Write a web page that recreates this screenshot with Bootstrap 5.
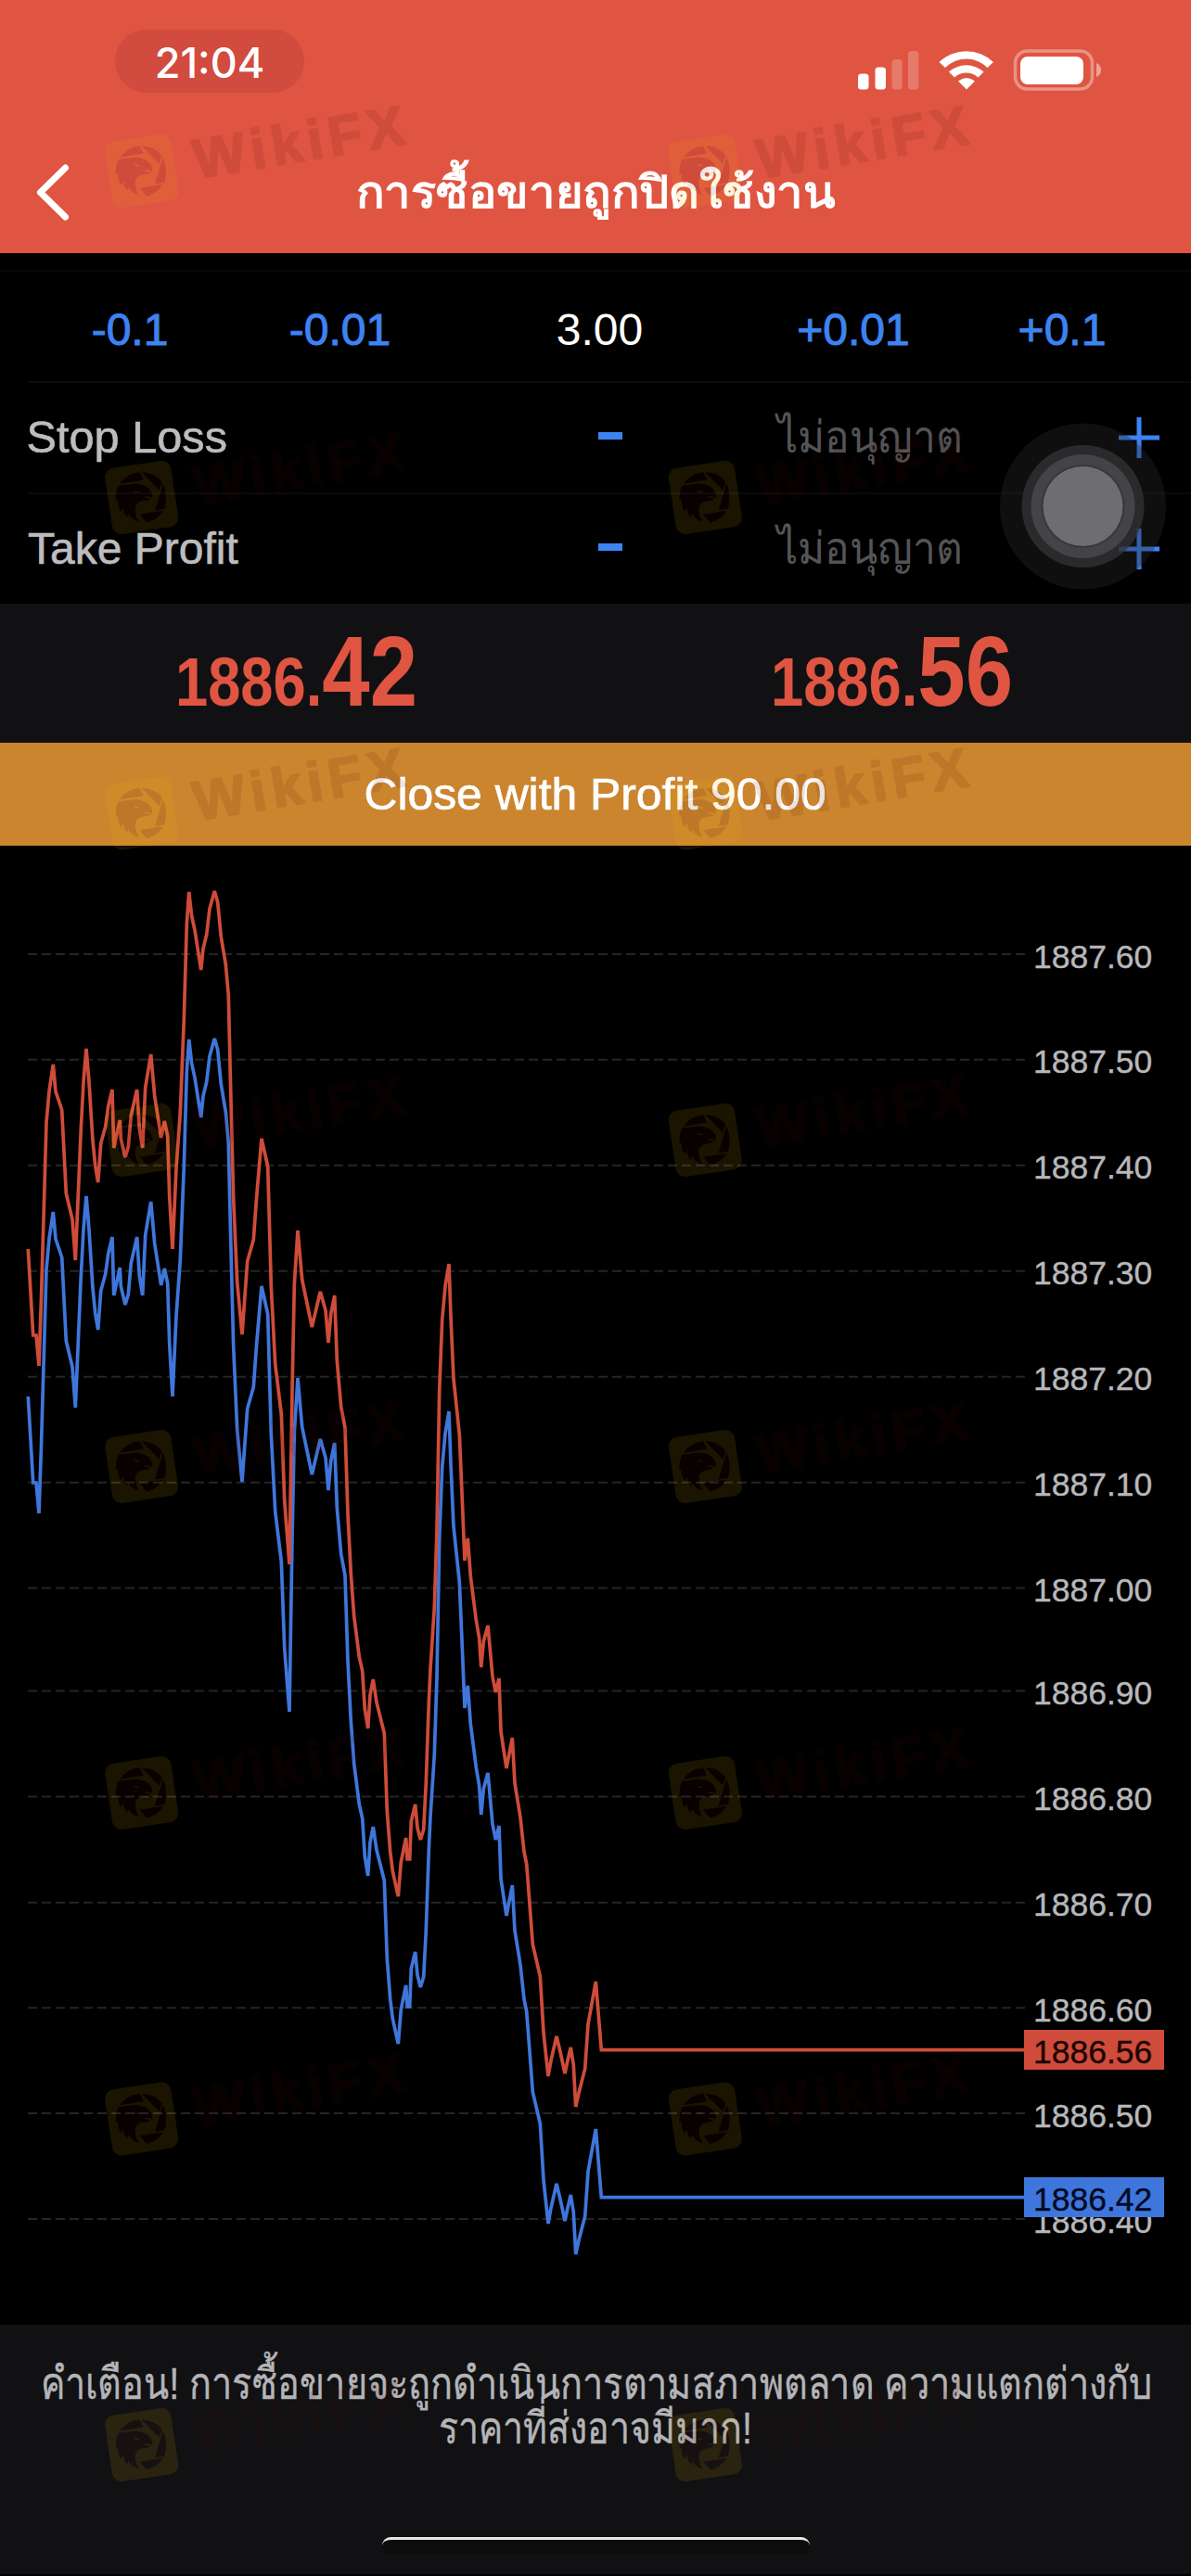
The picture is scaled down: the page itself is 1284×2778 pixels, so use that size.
<!DOCTYPE html>
<html lang="th">
<head>
    <meta charset="UTF-8">
    <meta name="viewport" content="width=device-width, initial-scale=1.0">
    <title>การซื้อขายถูกปิดใช้งาน</title>
    <link href="https://cdn.jsdelivr.net/npm/bootstrap@5.3.0/dist/css/bootstrap.min.css" rel="stylesheet">
    <style>
        body { background: #000; font-family: "Liberation Sans", sans-serif; font-size: 48px; line-height: 1; overflow-x: hidden; }
        .screen { width: 1284px; height: 2778px; background: #000001; }
        .top-area { height: 273px; background: #df5542; }
        .status-row { height: 132px; padding: 32px 97px 32px 124px; }
        .status-icons { margin-top: 20px; }
        .clock { width: 204px; height: 68px; background: #d14b3f; font-family: Inter, sans-serif; font-size: 45px; font-weight: 500; padding-top: 2px; }
        .title-row { height: 141px; padding: 10px 36px 0; }
        .title-side { width: 44px; }
        .page-title { font-size: 48px; font-weight: 700; }
        .volume-row { height: 120px; margin-top: 18px; padding: 8px 0 0 26px; grid-template-columns: 228px 225px 335px 212px 238px; border-top: 2px solid #08080a; }
        .level-row { height: 120px; margin-left: 30px; grid-template-columns: 530px 196px 362px 54px 112px; border-top: 2px solid #0b0b0d; color: #bdbdc0; -webkit-text-stroke: .6px; }
        .minus-icon { margin-bottom: 4px; }
        .blue-text { color: #3d83f2; -webkit-text-stroke: 1px #3d83f2; }
        .placeholder-text { color: #545457; -webkit-text-stroke: 0; }
        .quotes { height: 150px; background: #111113; }
        .close-btn { height: 111px; background: #cb852f; color: #fff; font-size: 47.5px; -webkit-text-stroke: .7px; }
        .chart { height: 1595px; }
        .chart text { font-size: 35.5px; stroke-width: .4px; }
        .notice { height: 269px; background: #111113; color: #b4b4b7; padding-top: 40px; -webkit-text-stroke: .4px; }
        .home-bar { width: 461px; height: 18px; background: #0c0c0c; border-top: 3px solid #e8e8e8; border-radius: 9px; margin-bottom: 22px; }
        .overlay-layer { pointer-events: none; }
        .fit-line { transform-origin: center; white-space: nowrap; }
    </style>
</head>
<body>
    <div class="screen position-relative overflow-hidden mx-auto">
        <header class="top-area text-white">
            <div class="status-row d-flex justify-content-between align-items-center">
                <div class="clock rounded-pill d-flex justify-content-center align-items-center">21:04</div>
                <svg class="status-icons" width="263" height="60" viewBox="924 46 263 60" fill="#fff">
                    <rect x="925" y="79.500" width="11.500" height="17" rx="3.500"/>
                    <rect x="943.500" y="72.500" width="11.500" height="24" rx="3.500"/>
                    <rect x="961.500" y="64" width="11" height="32.500" rx="3.500" opacity=".22"/>
                    <rect x="979" y="55" width="11.500" height="41.500" rx="3.500" opacity=".22"/>
                    <path d="M1012.500 67A42 42 0 0 1 1071 67L1064.500 73A32 32 0 0 0 1019 73Z"/>
                    <path d="M1023 77.500A28 28 0 0 1 1060.500 77.500L1054.500 83.500A19 19 0 0 0 1029 83.500Z"/>
                    <path d="M1033 87.500Q1042 80.500 1051 87.500L1042 96.500Z"/>
                    <rect x="1094.500" y="55" width="83" height="41" rx="13" fill="none" stroke="#fff" stroke-width="3.500" opacity=".36"/>
                    <rect x="1100" y="61" width="68" height="30" rx="8"/>
                    <path d="M1182 68q5 2 5 7.500t-5 7.500z" opacity=".45"/>
                </svg>
            </div>
            <div class="title-row d-flex justify-content-between align-items-center">
                <svg class="title-side" height="62" viewBox="0 0 44 62" fill="none" stroke="#fff" stroke-width="7" stroke-linecap="round" stroke-linejoin="round"><path d="M34.500 4L7.500 30.500L34.500 57"/></svg>
                <div class="page-title fit-line" data-width="517">การซื้อขายถูกปิดใช้งาน</div>
                <div class="title-side"></div>
            </div>
        </header>

        <div class="volume-row d-grid align-items-center text-center">
            <span class="blue-text">-0.1</span>
            <span class="blue-text">-0.01</span>
            <span class="text-white">3.00</span>
            <span class="blue-text">+0.01</span>
            <span class="blue-text">+0.1</span>
        </div>
        <div class="level-row d-grid align-items-center">
            <span><span class="fit-line d-inline-block" data-width="216">Stop Loss</span></span>
            <svg class="minus-icon mx-auto" width="26" height="8"><rect width="26" height="8" fill="#3d83f2"/></svg>
            <span class="placeholder-text text-center"><span class="fit-line d-inline-block" data-width="200">ไม่อนุญาต</span></span>
            <i></i>
            <svg class="mx-auto" width="44" height="44"><path d="M22 0V44M0 22H44" stroke="#3d83f2" stroke-width="5"/></svg>
        </div>
        <div class="level-row d-grid align-items-center">
            <span>Take Profit</span>
            <svg class="minus-icon mx-auto" width="26" height="8"><rect width="26" height="8" fill="#3d83f2"/></svg>
            <span class="placeholder-text text-center"><span class="fit-line d-inline-block" data-width="200">ไม่อนุญาต</span></span>
            <i></i>
            <svg class="mx-auto" width="44" height="44"><path d="M22 0V44M0 22H44" stroke="#3d83f2" stroke-width="5"/></svg>
        </div>

        <svg class="quotes d-block w-100" viewBox="0 651 1284 150" fill="#df5542" font-weight="700">
            <text transform="translate(189 761) scale(.855 1)" font-size="74">1886.<tspan font-size="108">42</tspan></text>
            <text transform="translate(831 761) scale(.855 1)" font-size="74">1886.<tspan font-size="108">56</tspan></text>
        </svg>

        <div class="close-btn d-flex justify-content-center align-items-center"><span class="fit-line" data-width="498">Close with Profit 90.00</span></div>

        <svg class="chart d-block w-100" id="chart" viewBox="0 912 1284 1595"></svg>

        <footer class="notice text-center d-flex flex-column align-items-center">
            <div class="fit-line" data-width="1198">คำเตือน! การซื้อขายจะถูกดำเนินการตามสภาพตลาด ความแตกต่างกับ</div>
            <div class="fit-line" data-width="338">ราคาที่ส่งอาจมีมาก!</div>
            <div class="home-bar mt-auto"></div>
        </footer>

        <!-- Watermark and the floating touch button lie over everything -->
        <svg class="overlay-layer position-absolute top-0 start-0" id="overlay" width="1284" height="2778" viewBox="0 0 1284 2778">
            <defs>
                <g id="brand" opacity=".105">
                    <rect x="-36" y="-36" width="72" height="72" rx="10" transform="rotate(-8.500)" fill="#f0b800"/>
                    <g transform="scale(.3333) translate(-152 -148)" fill="#500a00">
                        <path d="M82 104Q100 72 145 66L158 91Z"/>
                        <path d="M152 66Q196 68 218 98L209 124Z"/>
                        <path d="M221 103Q238 140 226 185L195 190Z"/>
                        <path d="M146 203L221 191Q205 220 168 229Z"/>
                        <path d="M77 110L133 103Q172 106 183 130Q188 139 186 150L176 145Q166 143 158 147L180 152L172 158Q138 157 132 178Q128 202 144 227Q118 218 109 200L106 212Q94 202 93 180L86 194Q74 180 76 156L69 160Q66 134 77 110Z"/>
                        <path d="M125 124L147 130Q134 138 125 124Z" fill="#f0b800"/>
                    </g>
                    <text x="57" y="18" transform="rotate(-9.500)" font-size="60" font-weight="700" fill="#500a00" stroke="#500a00" stroke-width="2" stroke-linejoin="round" textLength="230">WikiFX</text>
                </g>
            </defs>
            <g>
                <circle cx="1167.500" cy="546" r="89.500" fill="#28282b" opacity=".38"/>
                <circle cx="1167.500" cy="546" r="66" fill="#343437" opacity=".75"/>
                <circle cx="1167.500" cy="546" r="56" fill="#444446"/>
                <circle cx="1167.500" cy="546" r="45" fill="#38383a"/>
                <circle cx="1167.500" cy="546" r="43" fill="#6e6d70"/>
            </g>
        </svg>
    </div>

    <script src="https://cdn.jsdelivr.net/npm/bootstrap@5.3.0/dist/js/bootstrap.bundle.min.js"></script>
    <script>
        const chart = document.getElementById('chart');
        const overlay = document.getElementById('overlay');

        // Ask series, bid is the same shape one spread lower
        const ask = [
            [30.3,1347],[35.7,1440],[39,1440],[42,1473],[44.5,1400],[50,1210],[53,1177],[57.3,1148],[60,1177],[66.7,1197],[71.3,1287],[78,1315],
            [81.3,1359],[87.3,1217],[90,1167],[93,1131],[96,1167],[100,1230],[102.7,1257],[105.7,1275],[108.7,1233],[113.7,1215],[116.7,1193],[121,1175],
            [122.7,1238],[129.3,1208],[130.3,1228],[135,1248],[138.3,1237],[141.3,1203],[147.7,1175],[150.3,1217],[153.7,1238],[156.7,1173],[162.7,1137],
            [166.7,1182],[173.7,1227],[177.3,1209],[180.7,1225],[182.7,1290],[186,1347],[190,1260],[194.3,1200],[198.3,1100],[201.3,997],[203.7,962],
            [206.7,988],[210,1003],[216.7,1046],[219,1023],[222.7,1008],[226,980],[231.3,961],[234.7,973],[238.3,1010],[243.3,1040],[246.3,1073],
            [248.3,1160],[251.7,1293],[255.7,1383],[261,1439],[266.7,1360],[273.3,1337],[276.7,1290],[282,1228],[288.7,1258],[292.3,1387],[296.7,1471],
            [303.3,1525],[306.7,1618],[312,1687],[315,1500],[317.3,1386],[321,1327],[325.7,1380],[336.3,1431],[345.3,1393],[351,1413],[354,1448],
            [356.7,1417],[360.7,1397],[363.3,1467],[367.7,1517],[372,1540],[375,1633],[378.3,1697],[381.7,1743],[387.3,1787],[390.7,1802],[393.3,1843],
            [396.7,1864],[399,1828],[402.3,1811],[406,1836],[414.3,1869],[417.3,1953],[420.7,1997],[423.3,2018],[429.3,2045],[432.3,2008],[437.7,1982],
            [439,2005],[441.7,2005],[443.3,1964],[447.7,1946],[450,1971],[453.3,1984],[456.7,1973],[459.3,1923],[462.3,1836],[464,1800],[468.3,1733],
            [471,1650],[473.7,1500],[476.7,1423],[480,1387],[484,1363],[486,1420],[489,1487],[495.3,1547],[498.3,1617],[501,1683],[504.3,1659],
            [507.3,1700],[513.3,1747],[516.7,1767],[518.7,1798],[521.3,1770],[526,1753],[530,1797],[531,1808],[534.3,1825],[538,1810],[540,1867],
            [546,1907],[552.3,1874],[555,1923],[561,1960],[565,1997],[567.7,2010],[570.7,2049],[574.3,2097],[582.3,2131],[586,2192],[591,2239],
            [594,2222],[600,2196],[604.3,2214],[609,2236],[612,2222],[615.3,2208],[618.3,2227],[620.7,2272],[624,2257],[630.7,2231],[634,2183],
            [642.3,2137],[648.3,2210.7],[1105,2210.7]
        ];
        const spread = 159;
        const gridY = [1029, 1142.7, 1256.7, 1370.7, 1484.7, 1598.7, 1712.5, 1823.5, 1937.5, 2051.8, 2165.3, 2279, 2393];

        function line(points, color) {
            return `<polyline points="${points.map(p => p.join(',')).join(' ')}" fill="none" stroke="${color}" stroke-width="3.7" stroke-linejoin="miter" stroke-miterlimit="3"/>`;
        }

        function priceTag(y, price, color, textColor) {
            return `<rect x="1104" y="${y - 21.5}" width="151" height="43" fill="${color}"/>
                <text x="1114" y="${y + 14.5}" fill="${textColor}" stroke="${textColor}">${price}</text>`;
        }

        let html = '';
        gridY.forEach((y, i) => {
            html += `<path d="M30 ${y}H1105" stroke="#252527" stroke-width="2" stroke-dasharray="10 5"/>`;
            html += `<text x="1114" y="${y + 14.5}" fill="#b8b8bb" stroke="#b8b8bb">${(1887.6 - i / 10).toFixed(2)}</text>`;
        });
        html += line(ask.map(p => [p[0], p[1] + spread]), '#3f76db');
        html += line(ask, '#cf4c3a');
        html += priceTag(2210.5, '1886.56', '#cf4c3a', '#1a0403');
        html += priceTag(2369.5, '1886.42', '#3f76db', '#020a24');
        chart.innerHTML = html;

        // Watermark, two columns
        let marks = '';
        [184.5, 536.5, 877, 1229.5, 1581.5, 1933.5, 2285, 2636.5].forEach(y => {
            [152.7, 760.3].forEach(x => {
                marks += `<use href="#brand" x="${x}" y="${y}"/>`;
            });
        });
        overlay.insertAdjacentHTML('beforeend', marks);

        // Squeeze or stretch lines to their column width
        document.querySelectorAll('.fit-line').forEach(el => {
            el.style.transform = `scaleX(${el.dataset.width / el.offsetWidth})`;
        });
    </script>
</body>
</html>
